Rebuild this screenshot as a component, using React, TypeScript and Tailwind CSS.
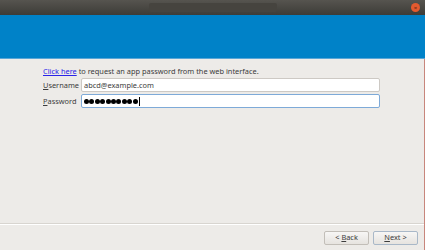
import React from "react";

export default function App() {
  return (
    <div
      className="w-[425px] h-[250px] overflow-hidden flex flex-col bg-[#edebe8] text-[#3c3c3c] relative"
      style={{ fontFamily: '"Noto Sans", "DejaVu Sans", sans-serif' }}
    >
      {/* title bar */}
      <div className="h-[15px] shrink-0 bg-gradient-to-b from-[#56544f] to-[#3d3c38] flex items-center justify-center relative">
        <div className="w-[128px] h-[9px] rounded-[2px] bg-[#46443f]" />
        <div className="absolute right-[5px] top-[3px] w-[9px] h-[9px] rounded-full bg-[#e35a2f] flex items-center justify-center">
          <span className="text-[6px] leading-none text-[#5a2010]">×</span>
        </div>
      </div>
      {/* header */}
      <div className="h-[44px] shrink-0 bg-[#0082c8] border-b border-[#5aa6d6]" />
      {/* content */}
      <div className="flex-1 flex flex-col border-r border-[#c8867c]">
        <div className="pl-[43px] pr-[44px] pt-[7px] flex flex-col text-[7.4px] leading-[10px]">
          <div>
            <span className="text-[#2a24e8] underline">Click here</span> to request an app password from the web interface.
          </div>
          <div className="flex items-center mt-[2px] gap-0">
            <span className="w-[38px]"><span className="underline">U</span>sername</span>
            <div className="flex-1 h-[14px] bg-white border border-[#cdc9c4] rounded-[2px] flex items-center px-[2px]">
              abcd@example.com
            </div>
          </div>
          <div className="flex items-center mt-[2px]">
            <span className="w-[38px]"><span className="underline">P</span>assword</span>
            <div className="flex-1 h-[14px] bg-white border border-[#7eaad8] rounded-[2px] flex items-center px-[2px] text-black">
              <div className="flex gap-[0.4px]">
                {Array.from({ length: 10 }).map((_, i) => (
                  <span key={i} className="w-[5px] h-[5px] rounded-full bg-black" />
                ))}
              </div>
              <span className="w-px h-[9px] bg-black ml-px" />
            </div>
          </div>
        </div>
        <div className="flex-1" />
        <div className="h-[2px] border-t border-[#d8d5d0] border-b border-b-white" />
        <div className="h-[25px] flex items-center justify-end gap-[4px] pr-[6px] text-[7.4px]">
          <div className="w-[45px] h-[14px] rounded-[2px] border border-[#c2beb8] bg-gradient-to-b from-[#f7f6f5] to-[#e6e3df] flex items-center justify-center">
            &lt; <span className="underline ml-[2px]">B</span>ack
          </div>
          <div className="w-[45px] h-[14px] rounded-[2px] border border-[#a9b8c8] bg-gradient-to-b from-[#f7f6f5] to-[#e6e3df] flex items-center justify-center">
            <span className="underline">N</span>ext &gt;
          </div>
        </div>
      </div>
    </div>
  );
}
